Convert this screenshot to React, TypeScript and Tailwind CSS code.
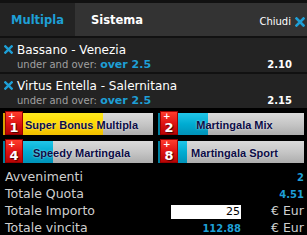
import React from "react";

function XIcon({ size = 10 }: { size?: number }) {
  return (
    <svg width={size} height={size} viewBox="0 0 10 10">
      <path d="M1.5 1.5 L8.5 8.5 M8.5 1.5 L1.5 8.5" stroke="#1e9fd6" strokeWidth="2.6" strokeLinecap="square" />
    </svg>
  );
}

function Bet({ title, odds }: { title: string; odds: string }) {
  return (
    <div className="flex h-[34px] bg-[#232323]">
      <div className="pl-[4px] pt-[7px]">
        <XIcon size={9} />
      </div>
      <div className="flex-1 pl-[4px] pr-[15px] flex flex-col">
        <div className="mt-[6px] text-[12px] leading-[13px] text-white">{title}</div>
        <div className="mt-[1px] flex items-baseline justify-between leading-[14px]">
          <div className="text-[10px] text-[#a0a0a0]">
            under and over: <span className="text-[11px] font-bold text-[#1e9fd6]">over 2.5</span>
          </div>
          <div className="text-[10px] font-bold text-white">{odds}</div>
        </div>
      </div>
    </div>
  );
}

function Promo({
  num,
  label,
  width,
  fillWidth,
  yellow,
}: {
  num: string;
  label: string;
  width: string;
  fillWidth: string;
  yellow?: boolean;
}) {
  return (
    <div className={`relative h-[24px] flex flex-col justify-end ${width}`}>
      <div className="relative h-[22px] bg-[linear-gradient(#dadada,#c6c6c6_50%,#adadad)] flex items-center justify-center pl-[7px] pt-[2px]">
        <div
          className={`absolute left-0 top-0 bottom-0 ${fillWidth} ${
            yellow
              ? "bg-[linear-gradient(#ffea20,#ffd800_50%,#f0bf00)] border-l-[2px] border-[#d9a000]"
              : "bg-[linear-gradient(#22c6e8,#00acd2_50%,#0092b8)] border-l-[2px] border-[#00809f]"
          }`}
        />
        <span className="relative font-['Liberation_Sans',sans-serif] text-[11px] font-bold text-[#0c0c46] [text-shadow:0_0_2px_rgba(255,255,255,0.7)] whitespace-nowrap">
          {label}
        </span>
      </div>
      <div className="absolute left-[2px] bottom-0 w-[18px] h-[24px] bg-[linear-gradient(#ff3c2c,#e01414_50%,#b80404)] border border-[#9a0000] flex flex-col">
        <span className="pl-[2px] text-[9px] leading-[8px] font-bold text-white">+</span>
        <span className="mt-[1px] self-center text-[13px] leading-[13px] font-bold text-white [text-shadow:1px_1px_1px_#400]">
          {num}
        </span>
      </div>
    </div>
  );
}

export default function App() {
  return (
    <div className="w-[307px] h-[235px] bg-black overflow-hidden font-['DejaVu_Sans',sans-serif]">
      <div className="h-[3px] bg-[#111]" />
      <div className="flex h-[33px] bg-[#333]">
        <div className="w-[75px] bg-[#232323] flex items-center justify-center pt-[2px] text-[11.5px] font-bold text-[#1e9fd6]">
          Multipla
        </div>
        <div className="flex items-center pl-[16px] pt-[2px] text-[11.5px] font-bold text-white">Sistema</div>
        <div className="ml-auto flex items-center gap-[4px] pr-[2px] pt-[4px] text-[10px] text-white">
          Chiudi
          <XIcon size={10} />
        </div>
      </div>
      <div className="h-[2px] bg-[#111]" />
      <Bet title="Bassano - Venezia" odds="2.10" />
      <div className="h-[2px] bg-[#111]" />
      <Bet title="Virtus Entella - Salernitana" odds="2.15" />
      <div className="pt-[3px] pl-[3px] flex flex-col gap-[4px]">
        <div className="flex gap-[5px]">
          <Promo num="1" label="Super Bonus Multipla" width="w-[150px]" fillWidth="w-[100px]" yellow />
          <Promo num="2" label="Martingala Mix" width="w-[146px]" fillWidth="w-[50px]" />
        </div>
        <div className="flex gap-[5px]">
          <Promo num="4" label="Speedy Martingala" width="w-[150px]" fillWidth="w-[50px]" />
          <Promo num="8" label="Martingala Sport" width="w-[146px]" fillWidth="w-[29px]" />
        </div>
      </div>
      <div className="mt-[6px] text-[12.5px] text-[#cfcfcf]">
        <div className="flex h-[17px] items-center pl-[5px]">
          <div className="w-[166px]">Avvenimenti</div>
          <div className="w-[70px]" />
          <div className="flex-1 text-right pr-[3px] text-[10px] font-bold text-[#1e9fd6]">2</div>
        </div>
        <div className="flex h-[17px] items-center pl-[5px]">
          <div className="w-[166px]">Totale Quota</div>
          <div className="w-[70px]" />
          <div className="flex-1 text-right pr-[3px] text-[10px] font-bold text-[#1e9fd6]">4.51</div>
        </div>
        <div className="flex h-[17px] items-center pl-[5px]">
          <div className="w-[166px]">Totale Importo</div>
          <div className="w-[70px] h-[14px] bg-white text-right pr-[1px] text-[11px] leading-[14px] text-black">25</div>
          <div className="w-[30px]" />
          <div>€ Eur</div>
        </div>
        <div className="flex h-[17px] items-center pl-[5px]">
          <div className="w-[166px]">Totale vincita</div>
          <div className="w-[70px] text-right text-[10px] font-bold text-[#1e9fd6]">112.88</div>
          <div className="w-[30px]" />
          <div>€ Eur</div>
        </div>
      </div>
    </div>
  );
}
